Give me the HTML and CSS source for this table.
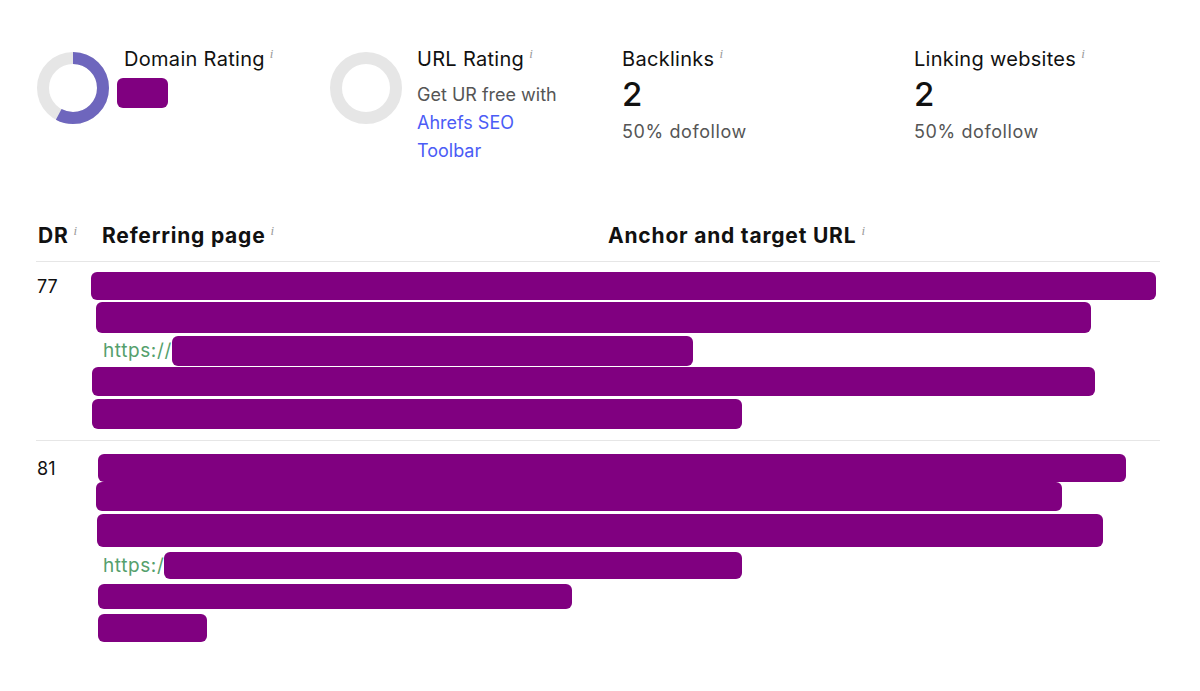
FILE: index.html
```html
<!DOCTYPE html>
<html lang="en">
<head>
<meta charset="utf-8">
<title>Backlinks</title>
<link rel="stylesheet" href="styles.css">
</head>
<body>
<div class="page">
  <section class="stats">
    <div class="stat">
      <svg class="donut" viewBox="0 0 74 74" width="74" height="74">
        <circle cx="37" cy="37" r="30" fill="none" stroke="#e6e6e6" stroke-width="12"/>
        <circle cx="37" cy="37" r="30" fill="none" stroke="#6e66bd" stroke-width="12" stroke-dasharray="109 200" transform="rotate(-90 37 37)"/>
      </svg>
      <div class="stat-body">
        <div class="stat-title">Domain Rating<span class="info">i</span></div>
        <div class="redact-box"></div>
      </div>
    </div>
    <div class="stat">
      <svg class="donut" viewBox="0 0 74 74" width="74" height="74">
        <circle cx="37" cy="37" r="30" fill="none" stroke="#e6e6e6" stroke-width="12"/>
      </svg>
      <div class="stat-body">
        <div class="stat-title">URL Rating<span class="info">i</span></div>
        <div class="stat-note">Get UR free with<br><a class="link" href="#">Ahrefs SEO<br>Toolbar</a></div>
      </div>
    </div>
    <div class="stat">
      <div class="stat-body">
        <div class="stat-title">Backlinks<span class="info">i</span></div>
        <div class="stat-value">2</div>
        <div class="stat-sub">50% dofollow</div>
      </div>
    </div>
    <div class="stat">
      <div class="stat-body">
        <div class="stat-title">Linking websites<span class="info">i</span></div>
        <div class="stat-value">2</div>
        <div class="stat-sub">50% dofollow</div>
      </div>
    </div>
  </section>

  <section class="table">
    <div class="thead">
      <div class="th">DR<span class="info">i</span></div>
      <div class="th">Referring page<span class="info">i</span></div>
      <div class="th">Anchor and target URL<span class="info">i</span></div>
    </div>

    <div class="row row-first">
      <div class="dr">77</div>
      <div class="bars">
        <div class="bar r1a"></div>
        <div class="bar r1b"></div>
        <div class="url-line r1c"><span class="proto">https://</span><span class="bar r1c-bar"></span></div>
        <div class="bar r1d"></div>
        <div class="bar r1e"></div>
      </div>
    </div>

    <div class="row row-second">
      <div class="dr">81</div>
      <div class="bars">
        <div class="bar r2a"></div>
        <div class="bar r2b"></div>
        <div class="bar r2c"></div>
        <div class="url-line r2d"><span class="proto">https:/</span><span class="bar r2d-bar"></span></div>
        <div class="bar r2e"></div>
        <div class="bar r2f"></div>
      </div>
    </div>
  </section>
</div>
</body>
</html>
```

FILE: styles.css
```css
* { box-sizing: border-box; }

html, body {
  margin: 0;
  padding: 0;
  background: #ffffff;
}

body {
  font-family: Inter, "Noto Sans", "Liberation Sans", sans-serif;
  color: #111111;
}

.page {
  width: 1124px;
  margin-left: 36px;
  padding-top: 47px;
}

/* ---------- stats ---------- */
.stats {
  display: grid;
  grid-template-columns: 293px 293px 292px 1fr;
}

.stat {
  display: flex;
  align-items: flex-start;
  gap: 14px;
}

.donut {
  display: block;
  flex: none;
  margin-top: 4px;
}

.stat-title {
  font-size: 20px;
  line-height: 24px;
  letter-spacing: 0.3px;
  color: #111111;
  white-space: nowrap;
}

.info {
  display: inline-block;
  vertical-align: top;
  margin-left: 5px;
  font-family: "Liberation Serif", "DejaVu Serif", serif;
  font-style: italic;
  font-size: 13px;
  line-height: 13px;
  letter-spacing: 0;
  color: #9a9a9a;
  font-weight: 400;
}

.redact-box {
  width: 51px;
  height: 30px;
  margin-top: 7px;
  margin-left: -7px;
  background: #800080;
  border-radius: 6px;
}

.stat-note {
  margin-top: 10px;
  font-size: 18px;
  line-height: 28px;
  color: #555555;
}

.link {
  color: #4b5cf6;
  text-decoration: none;
}

.stat-value {
  margin-top: 5px;
  font-size: 33px;
  line-height: 36px;
  font-weight: 500;
  color: #111111;
}

.stat-sub {
  margin-top: 7px;
  font-size: 18px;
  line-height: 26px;
  letter-spacing: 0.6px;
  color: #555555;
}

/* ---------- table ---------- */
.table {
  margin-top: 59px;
}

.thead {
  display: grid;
  grid-template-columns: 64px 506px 1fr;
  padding-bottom: 13px;
  border-bottom: 1px solid #e6e6e6;
}

.th {
  font-size: 21px;
  line-height: 24px;
  font-weight: 700;
  letter-spacing: 0.8px;
  color: #111111;
  padding-left: 2px;
  white-space: nowrap;
}

.row {
  display: grid;
  grid-template-columns: 66px 1fr;
  border-bottom: 1px solid #e6e6e6;
}

.row-first {
  padding: 10px 0 11px;
}

.row-second {
  padding: 13px 0 12px;
  border-bottom: none;
}

.dr {
  font-size: 18px;
  line-height: 28px;
  padding-left: 1px;
  padding-top: 1px;
  color: #111111;
}

.bars {
  display: flex;
  flex-direction: column;
  align-items: flex-start;
}

.bar {
  display: block;
  background: #800080;
  border-radius: 6px;
  flex: none;
}

.url-line {
  display: flex;
  align-items: center;
  padding-left: 1px;
}

.proto {
  font-size: 19px;
  line-height: 24px;
  letter-spacing: 0.6px;
  color: #55a06c;
  white-space: nowrap;
}

/* row 1 redactions */
.r1a { margin-left: -11px; width: 1065px; height: 28px; }
.r1b { margin-left: -6px; width: 995px; height: 31px; margin-top: 2px; }
.r1c { margin-top: 3px; height: 30px; }
.r1c-bar { width: 521px; height: 30px; }
.r1d { margin-left: -10px; width: 1003px; height: 29px; margin-top: 1px; }
.r1e { margin-left: -10px; width: 650px; height: 30px; margin-top: 3px; }

/* row 2 redactions */
.r2a { margin-left: -4px; width: 1028px; height: 28px; }
.r2b { margin-left: -6px; width: 966px; height: 29px; }
.r2c { margin-left: -5px; width: 1006px; height: 33px; margin-top: 3px; }
.r2d { margin-top: 5px; height: 27px; }
.r2d-bar { width: 578px; height: 27px; }
.r2e { margin-left: -4px; width: 474px; height: 25px; margin-top: 5px; }
.r2f { margin-left: -4px; width: 109px; height: 28px; margin-top: 5px; }
```
